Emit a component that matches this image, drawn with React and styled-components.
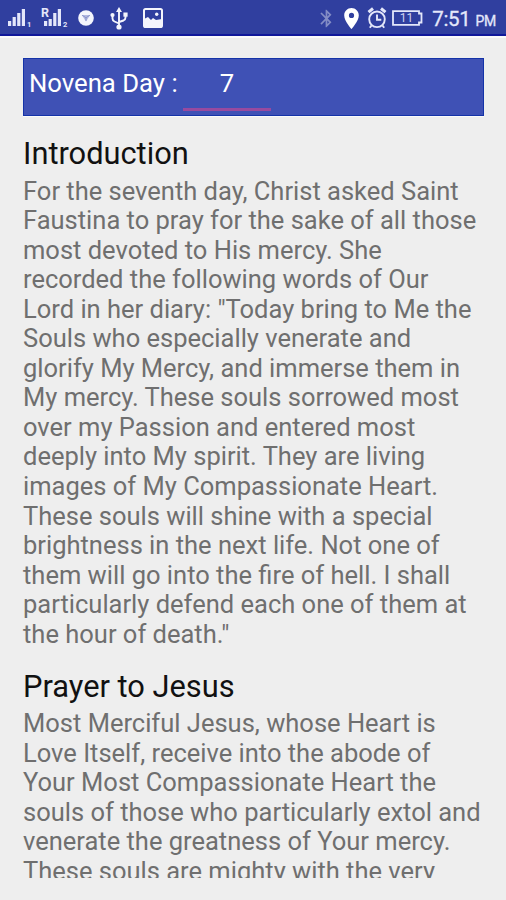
import styled, { createGlobalStyle } from "styled-components";
import { MdBluetooth, MdLocationOn } from "react-icons/md";

const INTRODUCTION = `For the seventh day, Christ asked Saint
Faustina to pray for the sake of all those
most devoted to His mercy. She
recorded the following words of Our
Lord in her diary: "Today bring to Me the
Souls who especially venerate and
glorify My Mercy, and immerse them in
My mercy. These souls sorrowed most
over my Passion and entered most
deeply into My spirit. They are living
images of My Compassionate Heart.
These souls will shine with a special
brightness in the next life. Not one of
them will go into the fire of hell. I shall
particularly defend each one of them at
the hour of death."`;

const PRAYER = `Most Merciful Jesus, whose Heart is
Love Itself, receive into the abode of
Your Most Compassionate Heart the
souls of those who particularly extol and
venerate the greatness of Your mercy.
These souls are mighty with the very`;

const GlobalStyle = createGlobalStyle`
  body {
    margin: 0;
    background: #eeeeee;
    font-family: Roboto, "Liberation Sans", sans-serif;
  }
`;

const Screen = styled.div`
  box-sizing: border-box;
  display: flex;
  flex-direction: column;
  width: 506px;
  height: 900px;
  padding-bottom: 22px;
  overflow: hidden;
  background: #eeeeee;
`;

const StatusBar = styled.header`
  box-sizing: border-box;
  display: flex;
  flex: none;
  justify-content: space-between;
  height: 36px;
  padding: 0 10px 0 8px;
  background: #303f9f;
  border-bottom: 2px solid #10189a;
  box-shadow: 0 2px 0 #fafafa;
  color: #ffffff;
`;

const StatusGroup = styled.div`
  display: flex;
  align-items: center;
  padding-top: 2px;

  svg {
    display: block;
    flex: none;
  }
`;

const Slot = styled.span`
  display: flex;
  margin-left: ${({ $left }) => $left || 0}px;
  opacity: ${({ $dim }) => ($dim ? 0.4 : 1)};
`;

const Clock = styled.span`
  margin-left: 9px;
  padding-top: 4px;
  font-size: 20.5px;
  letter-spacing: -0.3px;
  line-height: 30px;
  white-space: nowrap;
  color: #e4e7fa;
  -webkit-text-stroke: 0.3px #e4e7fa;

  small {
    margin-left: 5px;
    font-size: 14px;
  }
`;

const Content = styled.main`
  flex: 1;
  min-height: 0;
  padding: 22px 22px 0 23px;
  overflow: hidden;
`;

const DayBar = styled.div`
  box-sizing: border-box;
  display: flex;
  height: 58px;
  padding-left: 5px;
  background: #3f51b5;
  border: 1px solid #1433a8;
  box-shadow: 0 1px 0 #fafafa;
  color: #ffffff;
  font-size: 25.7px;
  line-height: 48px;
`;

const DayLabel = styled.span`
  width: 154px;
  white-space: nowrap;
`;

const DayValue = styled.span`
  box-sizing: border-box;
  width: 88px;
  height: 52px;
  border-bottom: 3px solid #974a9f;
  text-align: center;
`;

const Title = styled.h2`
  margin: ${({ $top }) => $top}px 0 0;
  color: #111111;
  font-size: 30.8px;
  font-weight: 400;
  line-height: 35px;
`;

const Text = styled.p`
  margin: 5.5px 0 0;
  color: #6f6f6f;
  font-size: 25.5px;
  line-height: 29.55px;
  white-space: pre;
`;

const SignalIcon = ({ roaming, sim }) => (
  <svg width="30" height="22" viewBox="-5 0 30 22" fill="#e4e7fa">
    <rect x="-1" y="14" width="3.2" height="5" />
    <rect x="3.6" y={roaming ? 12 : 10} width="3.2" height={roaming ? 7 : 9} />
    <rect x="8.2" y="6" width="3.2" height="13" />
    <rect x="12.8" y="2" width="3.2" height="17" />
    {roaming && (
      <text x="-4" y="10" fontSize="12.5" fontWeight="700">
        R
      </text>
    )}
    <text x="18" y="19.5" fontSize="7.5" fontWeight="700">
      {sim}
    </text>
  </svg>
);

const BadgeIcon = () => (
  <svg width="16" height="16" viewBox="0 0 16 16">
    <circle cx="8" cy="8" r="7.8" fill="#f4f5fc" />
    <path d="M3.8 5h8.4L8 11.5z" fill="#b4bae0" />
    <path
      d="M4.2 5.3 8 7.7l3.8-2.4M8 7.7v3.2"
      fill="none"
      stroke="#8993cc"
      strokeWidth="1"
    />
  </svg>
);

const UsbIcon = () => (
  <svg width="18" height="23" viewBox="0 0 18 23" fill="#f4f5fc">
    <path
      d="M9 4v15M2.5 8v3.5q0 2 2 3L9 16.5M15.5 8v2.5q0 2-2 3L9 15"
      fill="none"
      stroke="#f4f5fc"
      strokeWidth="1.9"
    />
    <path d="M9 0l3 5H6z" />
    <circle cx="2.5" cy="8" r="2.1" />
    <rect x="13.4" y="5.5" width="4.2" height="4.2" />
    <circle cx="9" cy="20" r="2.6" />
  </svg>
);

const PhotoIcon = () => (
  <svg width="20" height="20" viewBox="0 0 20 20">
    <rect
      x="1"
      y="1"
      width="18"
      height="18"
      rx="1.6"
      fill="#303f9f"
      stroke="#f4f5fc"
      strokeWidth="2"
    />
    <path d="M1 11l4-2 3 3 2-2 3 2 6-1v8H1z" fill="#f4f5fc" />
    <circle cx="13.7" cy="6.3" r="1.7" fill="#f4f5fc" />
  </svg>
);

const AlarmIcon = () => (
  <svg
    width="20"
    height="22"
    viewBox="0 0 20 22"
    fill="none"
    stroke="#e4e7fa"
    strokeWidth="1.9"
  >
    <circle cx="10" cy="12.3" r="7.8" />
    <path d="M10 7.5v5.3h4.3" />
    <path d="M1.5 5.2 6 1.5M18.5 5.2 14 1.5" strokeWidth="3" />
    <path d="M4.5 18.5 2.8 20.8M15.5 18.5l1.7 2.3" />
  </svg>
);

const BatteryIcon = ({ level }) => (
  <svg width="31" height="16" viewBox="0 0 31 16">
    <path
      d="M1 1.2h26v2.3h2.5v9H27v2.3H1z"
      fill="none"
      stroke="#e4e7fa"
      strokeWidth="1.8"
    />
    <text x="14.5" y="12.2" fontSize="12" textAnchor="middle" fill="#cdd2f0">
      {level}
    </text>
  </svg>
);

const Section = ({ title, text, top }) => (
  <section>
    <Title $top={top}>{title}</Title>
    <Text>{text}</Text>
  </section>
);

export default function App() {
  return (
    <>
      <GlobalStyle />
      <Screen>
        <StatusBar>
          <StatusGroup>
            <Slot $left={-4}>
              <SignalIcon sim="1" />
            </Slot>
            <Slot $left={6}>
              <SignalIcon sim="2" roaming />
            </Slot>
            <Slot $left={8}>
              <BadgeIcon />
            </Slot>
            <Slot $left={16}>
              <UsbIcon />
            </Slot>
            <Slot $left={15}>
              <PhotoIcon />
            </Slot>
          </StatusGroup>
          <StatusGroup>
            <Slot $dim>
              <MdBluetooth size={21} />
            </Slot>
            <Slot $left={2}>
              <MdLocationOn size={25} />
            </Slot>
            <Slot $left={3}>
              <AlarmIcon />
            </Slot>
            <Slot $left={5}>
              <BatteryIcon level="11" />
            </Slot>
            <Clock>
              7:51<small>PM</small>
            </Clock>
          </StatusGroup>
        </StatusBar>
        <Content>
          <DayBar>
            <DayLabel>Novena Day :</DayLabel>
            <DayValue>7</DayValue>
          </DayBar>
          <Section title="Introduction" text={INTRODUCTION} top={20} />
          <Section title="Prayer to Jesus" text={PRAYER} top={19.5} />
        </Content>
      </Screen>
    </>
  );
}
